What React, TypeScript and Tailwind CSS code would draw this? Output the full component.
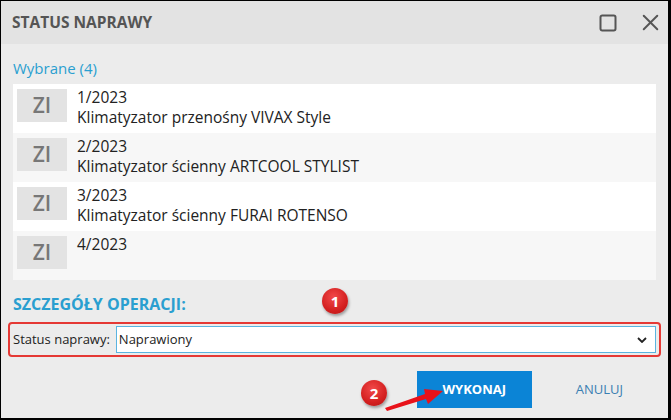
import { X, Square } from 'lucide-react'

const items = [
  { no: '1/2023', name: 'Klimatyzator przenośny VIVAX Style' },
  { no: '2/2023', name: 'Klimatyzator ścienny ARTCOOL STYLIST' },
  { no: '3/2023', name: 'Klimatyzator ścienny FURAI ROTENSO' },
  { no: '4/2023', name: '' },
]

const Badge = ({ n, className }: { n: number; className: string }) => (
  <div
    className={`absolute flex h-[26px] w-[26px] items-center justify-center rounded-full bg-[radial-gradient(circle_at_45%_35%,#f24a4a,#d42020_60%,#b01515)] text-[15px] font-bold text-white shadow-[1px_2px_3px_rgba(0,0,0,0.35)] ${className}`}
  >
    {n}
  </div>
)

const App = () => {
  return (
    <div className="relative flex h-[420px] w-[671px] flex-col border-t border-l border-r-[3px] border-b-2 border-black bg-[#ececec] font-['Open_Sans',sans-serif]">
      <header className="flex h-[43px] shrink-0 items-center justify-between bg-[#e3e3e3] pl-[11px] pr-[4px]">
        <h1 className="text-[15.5px] font-bold text-[#555]">STATUS NAPRAWY</h1>
        <div className="flex items-center gap-[19px] text-[#555]">
          <Square size={20} strokeWidth={2} absoluteStrokeWidth />
          <X size={27} strokeWidth={2} absoluteStrokeWidth />
        </div>
      </header>

      <section className="flex flex-1 flex-col px-[12px]">
        <p className="mt-[14px] text-[15px] leading-[20px] text-[#2a9fd0]">Wybrane (4)</p>

        <ul className="mt-[6px] flex flex-col">
          {items.map((item, i) => (
            <li
              key={item.no}
              className={`flex h-[49px] gap-[10px] pl-[4px] pt-[5px] ${i % 2 === 0 ? 'bg-white' : 'bg-[#f7f7f7]'}`}
            >
              <div className="flex h-[33px] w-[50px] items-center justify-center bg-[#e3e3e3] text-[21px] font-semibold text-[#777]">
                ZI
              </div>
              <div className="-mt-[2px] text-[15.5px] leading-[20px] text-[#222]">
                <p>{item.no}</p>
                {item.name && <p>{item.name}</p>}
              </div>
            </li>
          ))}
        </ul>

        <h2 className="mt-[14px] text-[16px] font-bold leading-[20px] text-[#2a9fd0]">SZCZEGÓŁY OPERACJI:</h2>

        <div className="-mx-[5px] mt-[8px] flex h-[35px] items-center gap-[6px] rounded-[4px] border-2 border-[#e53935] pl-[3px] pr-[3px]">
          <span className="text-[13px] text-[#222]">Status naprawy:</span>
          <div className="flex h-[27px] flex-1 items-center justify-between border-[1.5px] border-[#5ab4e0] bg-white pl-[2px] pr-[8px]">
            <span className="text-[13px] text-[#222]">Naprawiony</span>
            <svg width="10" height="6" viewBox="0 0 10 6" fill="none">
              <path d="M1 1l4 4 4-4" stroke="#222" strokeWidth="1.8" />
            </svg>
          </div>
        </div>

        <div className="mt-[14px] flex items-center justify-end gap-[32px] pr-[21px]">
          <button className="h-[37px] w-[115px] bg-[#0b84d6] text-[13px] font-bold text-white">WYKONAJ</button>
          <button className="h-[37px] px-[12px] text-[13px] text-[#3a7fb2]">ANULUJ</button>
        </div>
      </section>

      <Badge n={1} className="left-[321px] top-[287px]" />
      <Badge n={2} className="left-[360px] top-[379px]" />
      <svg className="absolute left-[380px] top-[380px]" width="70" height="35" viewBox="0 0 70 35">
        <polygon points="4,27 44,13 43,8 62,10 47,23 45,18 6,30" fill="#e8121a" />
      </svg>
    </div>
  )
}

export default App
